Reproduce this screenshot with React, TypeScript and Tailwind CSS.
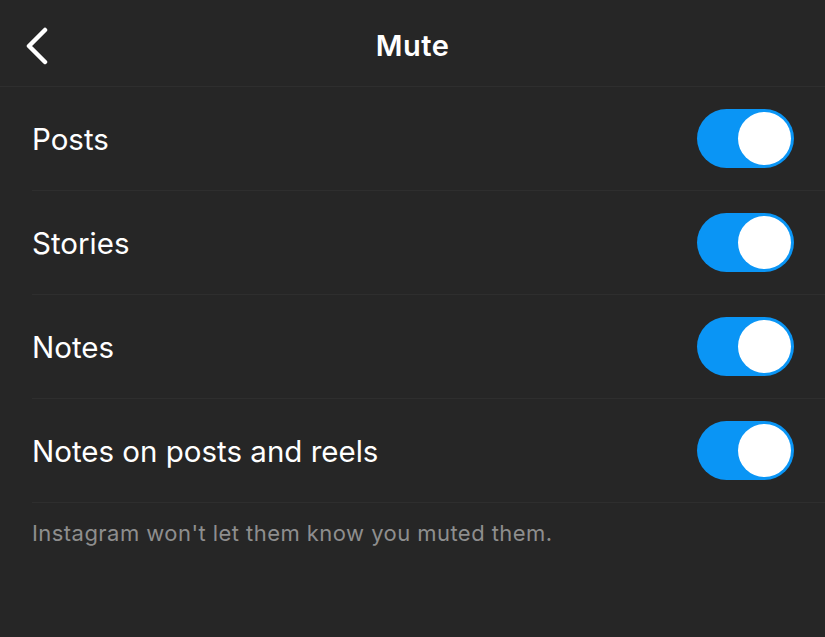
import React from "react";

const Toggle = () => (
  <div className="w-[97px] h-[59px] rounded-full bg-[#0a95f5] flex items-center justify-end pr-[3px]">
    <div className="w-[53px] h-[53px] rounded-full bg-white" />
  </div>
);

const rows = ["Posts", "Stories", "Notes", "Notes on posts and reels"];

export default function App() {
  return (
    <div className="w-[825px] h-[637px] bg-[#262626] text-white" style={{ fontFamily: 'Inter, "Liberation Sans", Arial, sans-serif' }}>
      <div className="relative h-[87px] flex items-center justify-center border-b border-[#2e2e2e]">
        <svg className="absolute left-[24px] top-[27px]" width="26" height="38" viewBox="0 0 26 38" fill="none">
          <path d="M21 3 L5 19 L21 35" stroke="white" strokeWidth="4.5" strokeLinecap="round" strokeLinejoin="round" />
        </svg>
        <span className="text-[29px] font-semibold pt-[6px] tracking-[0.5px]">Mute</span>
      </div>
      <div className="pl-[32px]">
        {rows.map((r) => (
          <div key={r} className="h-[104px] flex items-center justify-between pr-[31px] border-b border-[#2e2e2e]">
            <span className="text-[29.5px] pt-[1px]">{r}</span>
            <Toggle />
          </div>
        ))}
        <div className="pt-[14px] text-[22px] text-[#8e8e8e] tracking-[0.45px]">Instagram won't let them know you muted them.</div>
      </div>
    </div>
  );
}
